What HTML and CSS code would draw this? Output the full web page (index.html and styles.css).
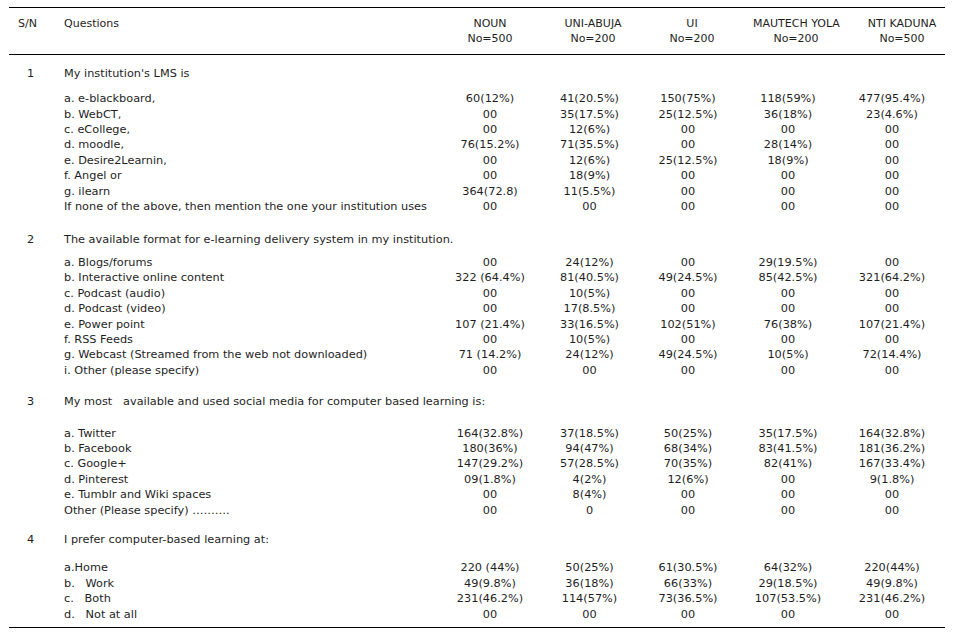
FILE: index.html
```html
<!DOCTYPE html>
<html lang="en">
<head>
<meta charset="utf-8">
<title>Survey table</title>
<link rel="stylesheet" href="styles.css">
</head>
<body>
<table class="survey">
  <colgroup>
    <col class="c-sn"><col class="c-q"><col class="c-1"><col class="c-2"><col class="c-3"><col class="c-4"><col class="c-5">
  </colgroup>
  <thead>
    <tr>
      <th class="sn">S/N</th>
      <th class="q">Questions</th>
      <th class="h1">NOUN<br>No=500</th>
      <th class="h2">UNI-ABUJA<br>No=200</th>
      <th class="h3">UI<br>No=200</th>
      <th class="h4">MAUTECH YOLA<br>No=200</th>
      <th class="h5">NTI KADUNA<br>No=500</th>
    </tr>
  </thead>
  <tbody class="g1">
    <tr class="qrow"><td class="sn">1</td><td class="q" colspan="6">My institution's LMS is</td></tr>
    <tr><td></td><td class="q">a. e-blackboard,</td><td>60(12%)</td><td>41(20.5%)</td><td>150(75%)</td><td>118(59%)</td><td>477(95.4%)</td></tr>
    <tr><td></td><td class="q">b. WebCT,</td><td>00</td><td>35(17.5%)</td><td>25(12.5%)</td><td>36(18%)</td><td>23(4.6%)</td></tr>
    <tr><td></td><td class="q">c. eCollege,</td><td>00</td><td>12(6%)</td><td>00</td><td>00</td><td>00</td></tr>
    <tr><td></td><td class="q">d. moodle,</td><td>76(15.2%)</td><td>71(35.5%)</td><td>00</td><td>28(14%)</td><td>00</td></tr>
    <tr><td></td><td class="q">e. Desire2Learnin,</td><td>00</td><td>12(6%)</td><td>25(12.5%)</td><td>18(9%)</td><td>00</td></tr>
    <tr><td></td><td class="q">f. Angel or</td><td>00</td><td>18(9%)</td><td>00</td><td>00</td><td>00</td></tr>
    <tr><td></td><td class="q">g. ilearn</td><td>364(72.8)</td><td>11(5.5%)</td><td>00</td><td>00</td><td>00</td></tr>
    <tr><td></td><td class="q">If none of the above, then mention the one your institution uses</td><td>00</td><td>00</td><td>00</td><td>00</td><td>00</td></tr>
  </tbody>
  <tbody class="g2">
    <tr class="qrow"><td class="sn">2</td><td class="q" colspan="6">The available format for e-learning delivery system in my institution.</td></tr>
    <tr><td></td><td class="q">a. Blogs/forums</td><td>00</td><td>24(12%)</td><td>00</td><td>29(19.5%)</td><td>00</td></tr>
    <tr><td></td><td class="q">b. Interactive online content</td><td>322 (64.4%)</td><td>81(40.5%)</td><td>49(24.5%)</td><td>85(42.5%)</td><td>321(64.2%)</td></tr>
    <tr><td></td><td class="q">c. Podcast (audio)</td><td>00</td><td>10(5%)</td><td>00</td><td>00</td><td>00</td></tr>
    <tr><td></td><td class="q">d. Podcast (video)</td><td>00</td><td>17(8.5%)</td><td>00</td><td>00</td><td>00</td></tr>
    <tr><td></td><td class="q">e. Power point</td><td>107 (21.4%)</td><td>33(16.5%)</td><td>102(51%)</td><td>76(38%)</td><td>107(21.4%)</td></tr>
    <tr><td></td><td class="q">f. RSS Feeds</td><td>00</td><td>10(5%)</td><td>00</td><td>00</td><td>00</td></tr>
    <tr><td></td><td class="q">g. Webcast (Streamed from the web not downloaded)</td><td>71 (14.2%)</td><td>24(12%)</td><td>49(24.5%)</td><td>10(5%)</td><td>72(14.4%)</td></tr>
    <tr><td></td><td class="q">i. Other (please specify)</td><td>00</td><td>00</td><td>00</td><td>00</td><td>00</td></tr>
  </tbody>
  <tbody class="g3">
    <tr class="qrow"><td class="sn">3</td><td class="q" colspan="6">My most&nbsp;&nbsp;&nbsp;available and used social media for computer based learning is:</td></tr>
    <tr><td></td><td class="q">a. Twitter</td><td>164(32.8%)</td><td>37(18.5%)</td><td>50(25%)</td><td>35(17.5%)</td><td>164(32.8%)</td></tr>
    <tr><td></td><td class="q">b. Facebook</td><td>180(36%)</td><td>94(47%)</td><td>68(34%)</td><td>83(41.5%)</td><td>181(36.2%)</td></tr>
    <tr><td></td><td class="q">c. Google+</td><td>147(29.2%)</td><td>57(28.5%)</td><td>70(35%)</td><td>82(41%)</td><td>167(33.4%)</td></tr>
    <tr><td></td><td class="q">d. Pinterest</td><td>09(1.8%)</td><td>4(2%)</td><td>12(6%)</td><td>00</td><td>9(1.8%)</td></tr>
    <tr><td></td><td class="q">e. Tumblr and Wiki spaces</td><td>00</td><td>8(4%)</td><td>00</td><td>00</td><td>00</td></tr>
    <tr><td></td><td class="q">Other (Please specify) ……….</td><td>00</td><td>0</td><td>00</td><td>00</td><td>00</td></tr>
  </tbody>
  <tbody class="g4">
    <tr class="qrow"><td class="sn">4</td><td class="q" colspan="6">I prefer computer-based learning at:</td></tr>
    <tr><td></td><td class="q">a.Home</td><td>220 (44%)</td><td>50(25%)</td><td>61(30.5%)</td><td>64(32%)</td><td>220(44%)</td></tr>
    <tr><td></td><td class="q">b.&nbsp;&nbsp;&nbsp;Work</td><td>49(9.8%)</td><td>36(18%)</td><td>66(33%)</td><td>29(18.5%)</td><td>49(9.8%)</td></tr>
    <tr><td></td><td class="q">c.&nbsp;&nbsp;&nbsp;Both</td><td>231(46.2%)</td><td>114(57%)</td><td>73(36.5%)</td><td>107(53.5%)</td><td>231(46.2%)</td></tr>
    <tr class="last"><td></td><td class="q">d.&nbsp;&nbsp;&nbsp;Not at all</td><td>00</td><td>00</td><td>00</td><td>00</td><td>00</td></tr>
  </tbody>
</table>
</body>
</html>
```

FILE: styles.css
```css
html, body {
  margin: 0;
  padding: 0;
  background: #ffffff;
}

body {
  padding: 7px 0 0 9px;
  font-family: "DejaVu Sans", "Liberation Sans", sans-serif;
  font-size: 11.3px;
  color: #1e1e1e;
}

.survey {
  width: 936px;
  border-collapse: collapse;
  table-layout: fixed;
  line-height: 15.4px;
}

.c-sn { width: 55px; }
.c-q { width: 376px; }
.c-1 { width: 100px; }
.c-2 { width: 99px; }
.c-3 { width: 98px; }
.c-4 { width: 102px; }
.c-5 { width: 106px; }

.survey th,
.survey td {
  padding: 0;
  text-align: center;
  white-space: nowrap;
  vertical-align: top;
}

.survey th {
  font-weight: normal;
  font-size: 11px;
}

.survey thead tr {
  border-top: 1px solid #000;
  border-bottom: 1px solid #000;
}

.survey thead th {
  padding-top: 8px;
  padding-bottom: 7px;
}

.survey thead .h1 { padding-left: 0; }
.survey thead .h2 { padding-left: 7px; }
.survey thead .h3 { padding-left: 8px; }
.survey thead .h4 { padding-left: 16px; }
.survey thead .h5 { padding-left: 20px; }

.survey .sn {
  text-align: left;
  padding-left: 18px;
}

.survey thead .sn {
  padding-left: 9px;
}

.survey .q {
  text-align: left;
}

.g1 .qrow td { padding-top: 11px; padding-bottom: 10px; }
.g2 .qrow td { padding-top: 18px; padding-bottom: 7px; }
.g3 .qrow td { padding-top: 16px; padding-bottom: 16px; }
.g4 .qrow td { padding-top: 14px; padding-bottom: 13px; }

.survey tr.last td {
  padding-bottom: 5px;
}

.survey tbody.g4 {
  border-bottom: 1px solid #000;
}
```
